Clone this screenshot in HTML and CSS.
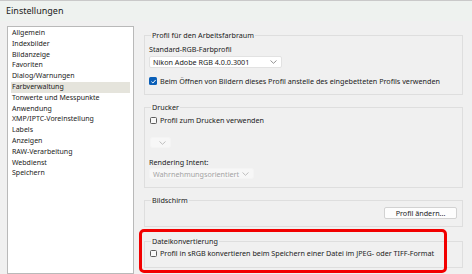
FILE: index.html
```html
<!DOCTYPE html>
<html lang="de">
<head>
  <meta charset="UTF-8">
  <title>Einstellungen</title>
  <link rel="stylesheet" href="styles.css">
</head>
<body>
<div class="titlebar">Einstellungen</div>

<div class="main">
  <ul class="nav">
    <li>Allgemein</li>
    <li>Indexbilder</li>
    <li>Bildanzeige</li>
    <li>Favoriten</li>
    <li>Dialog/Warnungen</li>
    <li class="active">Farbverwaltung</li>
    <li>Tonwerte und Messpunkte</li>
    <li>Anwendung</li>
    <li>XMP/IPTC-Voreinstellung</li>
    <li>Labels</li>
    <li>Anzeigen</li>
    <li>RAW-Verarbeitung</li>
    <li>Webdienst</li>
    <li>Speichern</li>
  </ul>

  <div class="content">
    <fieldset class="group group-work">
      <legend>Profil für den Arbeitsfarbraum</legend>
      <div class="label">Standard-RGB-Farbprofil</div>
      <div class="select select-wide">
        <span>Nikon Adobe RGB 4.0.0.3001</span>
        <svg class="chev" width="7" height="4" viewBox="0 0 7 4"><path d="M0.5 0.5 L3.5 3.3 L6.5 0.5" fill="none" stroke="#777" stroke-width="0.8"/></svg>
      </div>
      <div class="check-row">
        <span class="box checked">
          <svg width="7" height="7" viewBox="0 0 7 7"><path d="M1.4 3.6 L2.9 5 L5.7 1.9" fill="none" stroke="#fff" stroke-width="1"/></svg>
        </span>
        <span>Beim Öffnen von Bildern dieses Profil anstelle des eingebetteten Profils verwenden</span>
      </div>
    </fieldset>

    <fieldset class="group group-print">
      <legend>Drucker</legend>
      <div class="check-row">
        <span class="box"></span>
        <span>Profil zum Drucken verwenden</span>
      </div>
      <div class="select select-small disabled">
        <span></span>
        <svg class="chev" width="7" height="4" viewBox="0 0 7 4"><path d="M0.5 0.5 L3.5 3.3 L6.5 0.5" fill="none" stroke="#b0b0b0" stroke-width="0.8"/></svg>
      </div>
      <div class="label label-intent">Rendering Intent:</div>
      <div class="select select-intent disabled">
        <span>Wahrnehmungsorientiert</span>
        <svg class="chev" width="7" height="4" viewBox="0 0 7 4"><path d="M0.5 0.5 L3.5 3.3 L6.5 0.5" fill="none" stroke="#b0b0b0" stroke-width="0.8"/></svg>
      </div>
    </fieldset>

    <fieldset class="group group-screen">
      <legend>Bildschirm</legend>
      <div class="btn-row">
        <button class="btn">Profil ändern...</button>
      </div>
    </fieldset>

    <fieldset class="group group-convert">
      <legend>Dateikonvertierung</legend>
      <div class="check-row">
        <span class="box"></span>
        <span>Profil in sRGB konvertieren beim Speichern einer Datei im JPEG- oder TIFF-Format</span>
      </div>
    </fieldset>

    <div class="highlight"></div>
  </div>
</div>
</body>
</html>
```

FILE: styles.css
```css
body {
  margin: 0;
  background-color: #f0f0f0;
  font-family: 'Noto Sans', 'Open Sans', sans-serif;
  font-size: 7.2px;
  color: #1b1b1b;
  overflow: hidden;
  height: 274px;
}

.titlebar {
  height: 20px;
  border-top: 1px solid #c9c9c9;
  background-color: #eef2ef;
  padding-left: 6px;
  font-size: 9px;
  line-height: 19px;
}

.main {
  display: flex;
  padding: 5px 0 0 7px;
}

.nav {
  list-style: none;
  margin: 0;
  width: 119px;
  height: 245px;
  padding: 1px 3px 0 3px;
  background-color: #fff;
  border: 1px solid #b9b9b9;
  flex-shrink: 0;
  font-size: 7px;
}

.nav li {
  height: 10.8px;
  line-height: 10.8px;
  padding-left: 1px;
}

.nav li.active {
  background-color: #e5e4dc;
}

.content {
  position: relative;
  margin-left: 10px;
  width: 319px;
  display: flex;
  flex-direction: column;
}

.group {
  margin: 0;
  padding: 0 5px 0 4px;
  border: 1px solid #dedede;
  min-width: 0;
}

.group legend {
  padding: 0 1px;
  margin-left: 2px;
  line-height: 10px;
}

.group-work {
  margin-top: 4px;
  padding-bottom: 8px;
}

.group-print {
  margin-top: 7px;
  padding-bottom: 8px;
}

.group-screen {
  margin-top: 7px;
  padding-bottom: 7px;
}

.group-convert {
  margin-top: 9px;
  padding-bottom: 9px;
}

.label {
  line-height: 10px;
  margin-top: 4px;
}

.label-intent {
  margin-top: 9px;
}

.select {
  display: flex;
  align-items: center;
  justify-content: space-between;
  box-sizing: border-box;
  height: 12px;
  padding: 0 4px 0 3px;
  background-color: #fff;
  border: 1px solid #e2e2e2;
  border-radius: 2px;
  margin-top: 2px;
}

.select-wide {
  width: 133px;
}

.select-small {
  width: 21px;
  height: 11px;
  margin-top: 12px;
  margin-left: 1px;
}

.select-intent {
  width: 105px;
  height: 11px;
  margin-top: 1px;
}

.select.disabled {
  background-color: #f7f7f7;
  border-color: #f4f4f4;
  color: #a3a3a3;
}

.check-row {
  display: flex;
  align-items: center;
  gap: 3px;
  line-height: 10px;
  margin-top: 8px;
}

.group-print .check-row {
  margin-top: 3px;
  margin-left: 1px;
}

.group-convert .check-row {
  margin-top: 2px;
  margin-left: 1px;
}

.box {
  box-sizing: border-box;
  width: 7px;
  height: 7px;
  border: 1px solid #5c5c5c;
  border-radius: 1.5px;
  background-color: #f8f8f8;
  display: flex;
  align-items: center;
  justify-content: center;
}

.box.checked {
  width: 8px;
  height: 8px;
  border: none;
  background-color: #0a5fb8;
}

.btn-row {
  display: flex;
  justify-content: flex-end;
  margin-top: 2px;
}

.btn {
  font-family: inherit;
  font-size: 7.2px;
  color: #1b1b1b;
  height: 12px;
  width: 73px;
  padding: 0;
  background-color: #fdfdfd;
  border: 1px solid #d2d2d2;
  border-radius: 2px;
}

.highlight {
  position: absolute;
  left: -5px;
  top: 203px;
  width: 302px;
  height: 38px;
  border: 3px solid #f20000;
  border-radius: 5px;
}
```
